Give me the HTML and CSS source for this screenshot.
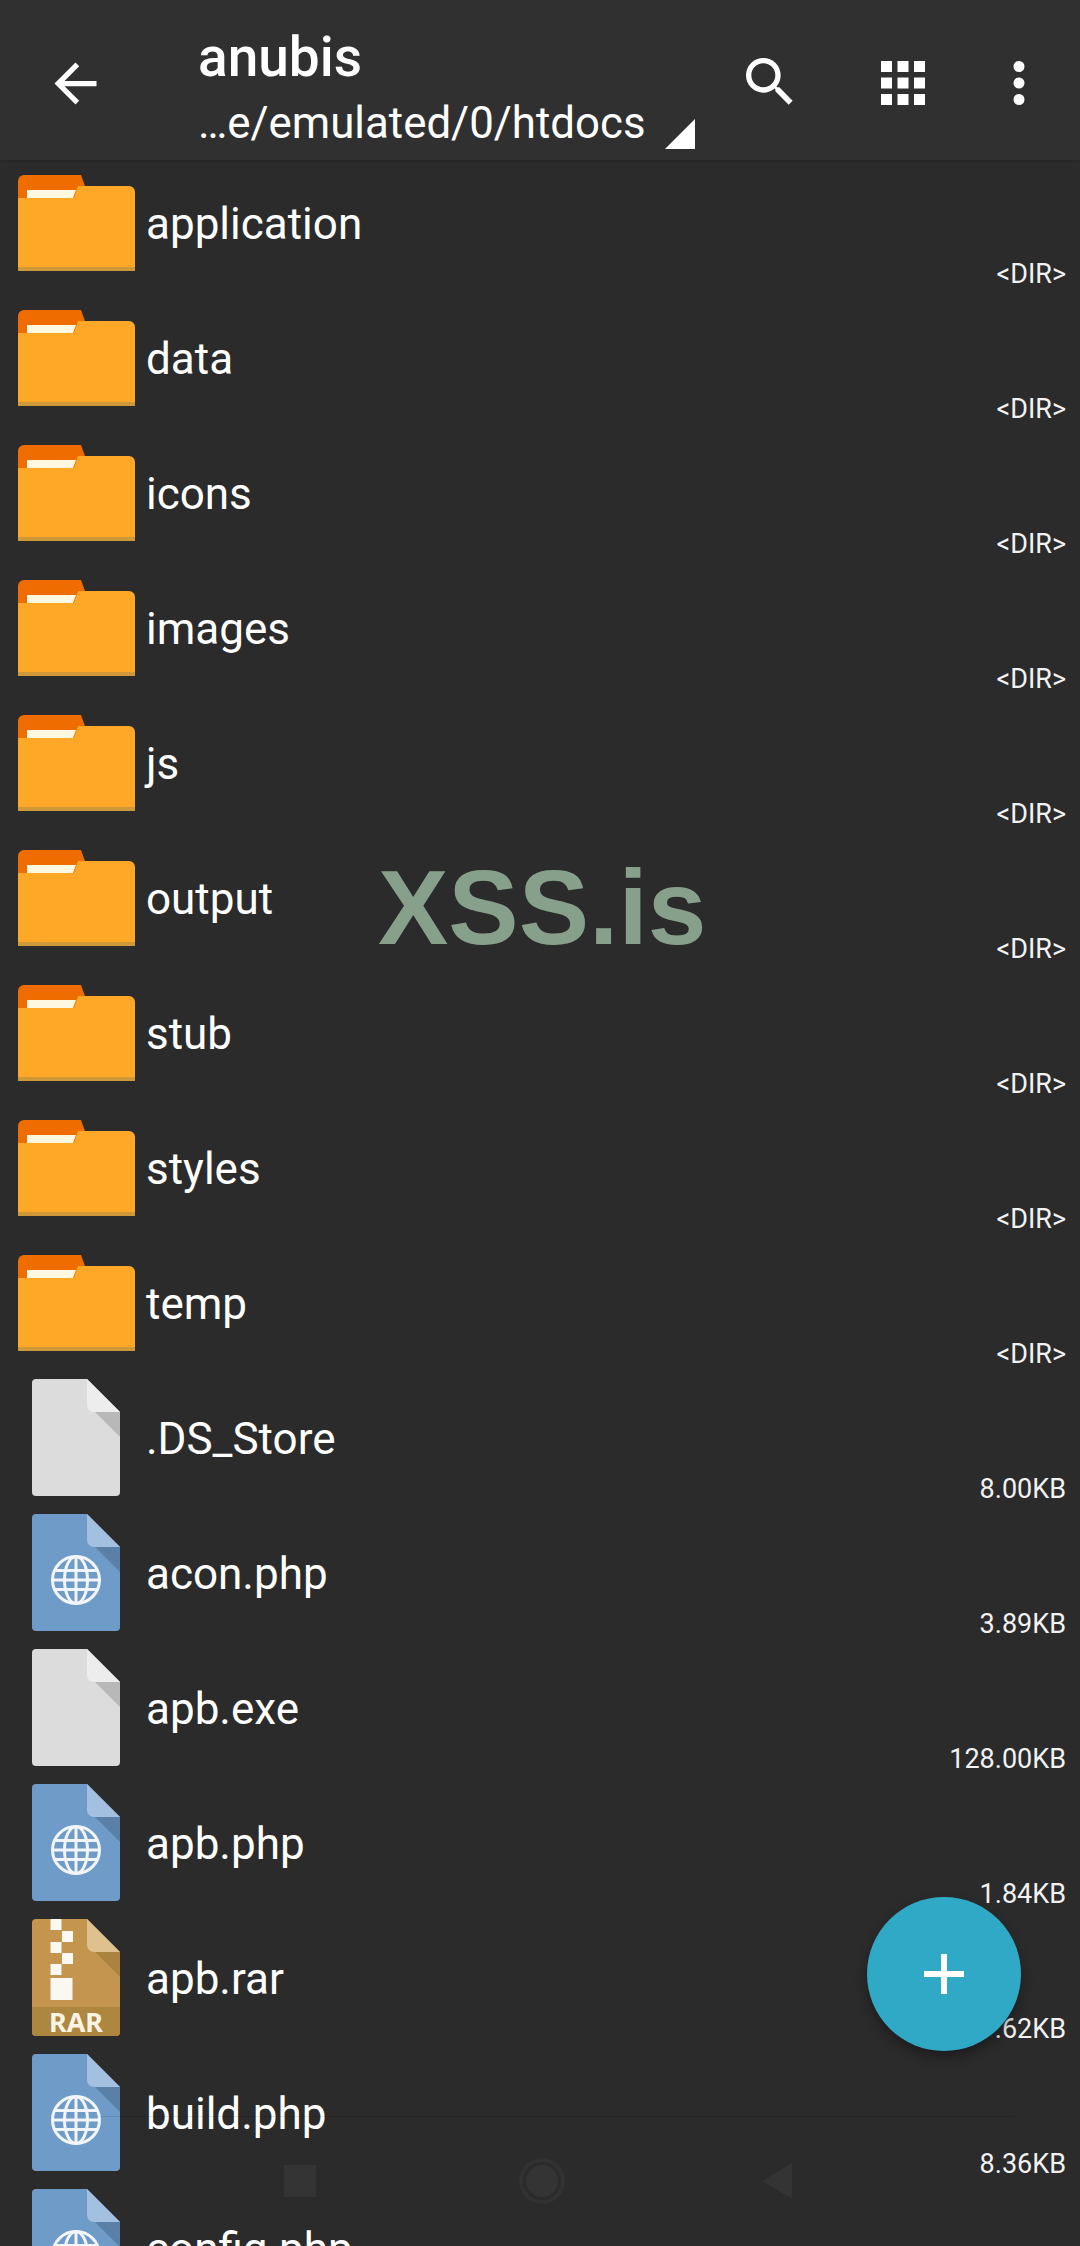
FILE: index.html
```html
<!DOCTYPE html>
<html lang="en">
<head>
    <meta charset="UTF-8">
    <meta name="viewport" content="width=device-width, initial-scale=1.0">
    <title>anubis</title>
    <link rel="stylesheet" href="styles.css">
</head>
<body>
    <svg class="defs" width="0" height="0">
        <defs>
            <symbol id="folder" viewBox="0 0 117 96">
                <path d="M0 6a6 6 0 0 1 6-6h57l4 11h44v30H0z" fill="#ef6c00"/>
                <path d="M0 23h56l4-12h51a6 6 0 0 1 6 6v79H0z" fill="#ffa726"/>
                <path d="M9 15h49l-3 8H9z" fill="#fff8e1"/>
                <rect y="92" width="117" height="4" fill="#cf9838"/>
            </symbol>
            <symbol id="globe" viewBox="0 0 52 52">
                <g fill="none" stroke="#f2f6fa" stroke-width="3">
                    <circle cx="26" cy="26" r="23.5"/>
                    <ellipse cx="26" cy="26" rx="11.5" ry="23.5"/>
                    <path d="M26 2v48M4 16.5h44M2 26h48M4 35.5h44"/>
                </g>
            </symbol>
        </defs>
    </svg>

    <header class="toolbar">
        <svg class="icon back" viewBox="0 0 24 24"><path d="M20 11H7.83l5.59-5.59L12 4l-8 8 8 8 1.41-1.41L7.83 13H20z"/></svg>
        <div class="titles">
            <div class="title">anubis</div>
            <div class="path">…e/emulated/0/htdocs</div>
        </div>
        <svg class="corner" viewBox="0 0 30 30"><path d="M30 0v30H0z"/></svg>
        <svg class="icon search" viewBox="0 0 24 24"><path d="M15.5 14h-.79l-.28-.27A6.47 6.47 0 0 0 16 9.5 6.5 6.5 0 1 0 9.5 16c1.61 0 3.09-.59 4.23-1.57l.27.28v.79l5 4.99L20.49 19l-4.99-5zm-6 0C7.01 14 5 11.99 5 9.5S7.01 5 9.5 5 14 7.01 14 9.5 11.99 14 9.5 14z"/></svg>
        <svg class="icon apps" viewBox="0 0 24 24"><path d="M4 8h4V4H4v4zm6 12h4v-4h-4v4zm-6 0h4v-4H4v4zm0-6h4v-4H4v4zm6 0h4v-4h-4v4zm6-10v4h4V4h-4zm-6 4h4V4h-4v4zm6 6h4v-4h-4v4zm0 6h4v-4h-4v4z"/></svg>
        <svg class="icon more" viewBox="0 0 24 24"><path d="M12 8a2 2 0 1 0 0-4 2 2 0 0 0 0 4zm0 2a2 2 0 1 0 0 4 2 2 0 0 0 0-4zm0 6a2 2 0 1 0 0 4 2 2 0 0 0 0-4z"/></svg>
    </header>

    <main class="list">
        <div class="row"><svg class="folder"><use href="#folder"/></svg><div class="info"><div class="name">application</div><div class="size">&lt;DIR&gt;</div></div></div>
        <div class="row"><svg class="folder"><use href="#folder"/></svg><div class="info"><div class="name">data</div><div class="size">&lt;DIR&gt;</div></div></div>
        <div class="row"><svg class="folder"><use href="#folder"/></svg><div class="info"><div class="name">icons</div><div class="size">&lt;DIR&gt;</div></div></div>
        <div class="row"><svg class="folder"><use href="#folder"/></svg><div class="info"><div class="name">images</div><div class="size">&lt;DIR&gt;</div></div></div>
        <div class="row"><svg class="folder"><use href="#folder"/></svg><div class="info"><div class="name">js</div><div class="size">&lt;DIR&gt;</div></div></div>
        <div class="row"><svg class="folder"><use href="#folder"/></svg><div class="info"><div class="name">output</div><div class="size">&lt;DIR&gt;</div></div></div>
        <div class="row"><svg class="folder"><use href="#folder"/></svg><div class="info"><div class="name">stub</div><div class="size">&lt;DIR&gt;</div></div></div>
        <div class="row"><svg class="folder"><use href="#folder"/></svg><div class="info"><div class="name">styles</div><div class="size">&lt;DIR&gt;</div></div></div>
        <div class="row"><svg class="folder"><use href="#folder"/></svg><div class="info"><div class="name">temp</div><div class="size">&lt;DIR&gt;</div></div></div>

        <div class="row">
            <svg class="file grey" viewBox="0 0 88 117"><path class="body" d="M4 0h51l33 33v80a4 4 0 0 1-4 4H4a4 4 0 0 1-4-4V4a4 4 0 0 1 4-4z"/><path class="shade" d="M63 33h25v25z"/><path class="fold" d="M55 0l33 33H62a7 7 0 0 1-7-7z"/></svg>
            <div class="info"><div class="name">.DS_Store</div><div class="size">8.00KB</div></div>
        </div>
        <div class="row">
            <svg class="file blue" viewBox="0 0 88 117"><path class="body" d="M4 0h51l33 33v80a4 4 0 0 1-4 4H4a4 4 0 0 1-4-4V4a4 4 0 0 1 4-4z"/><path class="shade" d="M63 33h25v25z"/><path class="fold" d="M55 0l33 33H62a7 7 0 0 1-7-7z"/><use href="#globe" x="18" y="40" width="52" height="52"/></svg>
            <div class="info"><div class="name">acon.php</div><div class="size">3.89KB</div></div>
        </div>
        <div class="row">
            <svg class="file grey" viewBox="0 0 88 117"><path class="body" d="M4 0h51l33 33v80a4 4 0 0 1-4 4H4a4 4 0 0 1-4-4V4a4 4 0 0 1 4-4z"/><path class="shade" d="M63 33h25v25z"/><path class="fold" d="M55 0l33 33H62a7 7 0 0 1-7-7z"/></svg>
            <div class="info"><div class="name">apb.exe</div><div class="size">128.00KB</div></div>
        </div>
        <div class="row">
            <svg class="file blue" viewBox="0 0 88 117"><path class="body" d="M4 0h51l33 33v80a4 4 0 0 1-4 4H4a4 4 0 0 1-4-4V4a4 4 0 0 1 4-4z"/><path class="shade" d="M63 33h25v25z"/><path class="fold" d="M55 0l33 33H62a7 7 0 0 1-7-7z"/><use href="#globe" x="18" y="40" width="52" height="52"/></svg>
            <div class="info"><div class="name">apb.php</div><div class="size">1.84KB</div></div>
        </div>
        <div class="row">
            <svg class="file zip" viewBox="0 0 88 117">
                <path class="body" d="M4 0h51l33 33v80a4 4 0 0 1-4 4H4a4 4 0 0 1-4-4V4a4 4 0 0 1 4-4z"/>
                <path class="shade" d="M63 33h25v25z"/>
                <path class="fold" d="M55 0l33 33H62a7 7 0 0 1-7-7z"/>
                <path class="band" d="M0 88h88v25a4 4 0 0 1-4 4H4a4 4 0 0 1-4-4z"/>
                <path class="teeth" d="M18.500 0h11v11h-11zM30 12h11v11H30zM18.500 23h11v11h-11zM30 34h11v11H30zM18.500 45h11v11h-11zM18.500 59h22v22h-22z"/>
                <text class="rar" x="44" y="113">RAR</text>
            </svg>
            <div class="info"><div class="name">apb.rar</div><div class="size">7.62KB</div></div>
        </div>
        <div class="row">
            <svg class="file blue" viewBox="0 0 88 117"><path class="body" d="M4 0h51l33 33v80a4 4 0 0 1-4 4H4a4 4 0 0 1-4-4V4a4 4 0 0 1 4-4z"/><path class="shade" d="M63 33h25v25z"/><path class="fold" d="M55 0l33 33H62a7 7 0 0 1-7-7z"/><use href="#globe" x="18" y="40" width="52" height="52"/></svg>
            <div class="info"><div class="name">build.php</div><div class="size">8.36KB</div></div>
        </div>
        <div class="row">
            <svg class="file blue" viewBox="0 0 88 117"><path class="body" d="M4 0h51l33 33v80a4 4 0 0 1-4 4H4a4 4 0 0 1-4-4V4a4 4 0 0 1 4-4z"/><path class="shade" d="M63 33h25v25z"/><path class="fold" d="M55 0l33 33H62a7 7 0 0 1-7-7z"/><use href="#globe" x="18" y="40" width="52" height="52"/></svg>
            <div class="info"><div class="name">config.php</div></div>
        </div>
    </main>

    <div class="watermark">XSS.is</div>

    <button class="fab">
        <svg viewBox="0 0 40 40"><path d="M17 0h6v17h17v6H23v17h-6V23H0v-6h17z"/></svg>
    </button>

    <!-- ghost of the system nav bar over the list -->
    <div class="navline"></div>
    <nav class="navbar">
        <span class="nav-square"></span>
        <span class="nav-circle"></span>
        <span class="nav-back"></span>
    </nav>
</body>
</html>
```

FILE: styles.css
```css
html, body {
    margin: 0;
    height: 2246px;
    overflow: hidden;
}
body {
    position: relative;
    width: 1080px;
    font-family: Roboto, "Liberation Sans", sans-serif;
    background-color: #2b2b2b;
    color: #fff;
}
.defs {
    position: absolute;
}

/* toolbar */
.toolbar {
    height: 160px;
    background-color: #303030;
    display: flex;
    align-items: flex-start;
    box-shadow: 0 1px 3px rgba(0, 0, 0, 0.15);
}
.icon {
    width: 66px;
    height: 66px;
    margin-top: 50px;
    fill: #fff;
    flex: none;
}
.back {
    width: 63px;
    height: 63px;
    margin-top: 52px;
    margin-left: 44px;
}
.titles {
    margin-left: 91px;
    width: 465px;
    flex: none;
}
.title {
    font-size: 55px;
    font-weight: 500;
    line-height: 60px;
    margin-top: 27px;
}
.path {
    font-size: 43.800px;
    line-height: 50px;
    margin-top: 11px;
    white-space: nowrap;
}
.corner {
    width: 30px;
    height: 30px;
    fill: #fff;
    margin-top: 119px;
    margin-left: 2px;
    flex: none;
}
.search {
    width: 64px;
    height: 64px;
    margin-left: 43px;
}
.apps {
    margin-left: 68px;
}
.more {
    margin-left: 50px;
}

/* file list */
.row {
    height: 135px;
    display: flex;
    align-items: flex-start;
}
.folder {
    width: 117px;
    height: 96px;
    margin: 15px 11px 0 18px;
    flex: none;
}
.file {
    width: 88px;
    height: 117px;
    margin: 4px 26px 0 32px;
    flex: none;
}
.info {
    flex: 1;
    padding-right: 14px;
}
.name {
    font-size: 44px;
    line-height: 52px;
    margin-top: 38px;
}
.size {
    font-size: 27px;
    line-height: 30px;
    margin-top: 9px;
    text-align: right;
    color: #f2f2f2;
}
.grey .body { fill: #dcdcdc; }
.grey .fold { fill: #ededed; }
.grey .shade { fill: #b8b8b8; }
.blue .body { fill: #6f9bc8; }
.blue .fold { fill: #a3c0e0; }
.blue .shade { fill: #5a80a8; }
.zip .body { fill: #c4954f; }
.zip .fold { fill: #dfc08f; }
.zip .shade { fill: #a9833f; }
.zip .band { fill: #ad863f; }
.zip .teeth { fill: #fbf8f2; }
.rar {
    font-family: "Noto Sans", sans-serif;
    font-size: 27px;
    font-weight: 700;
    fill: #fbf3e4;
    text-anchor: middle;
}

/* overlays */
.watermark {
    position: absolute;
    left: 378px;
    top: 847px;
    font-family: "Liberation Sans", Arial, sans-serif;
    font-size: 105.500px;
    font-weight: 700;
    line-height: 120px;
    color: #86a08b;
}
.fab {
    position: absolute;
    left: 867px;
    top: 1897px;
    width: 154px;
    height: 154px;
    padding: 0;
    border: none;
    border-radius: 50%;
    background-color: #30a9c7;
    box-shadow: 0 6px 12px rgba(0, 0, 0, 0.35);
    display: flex;
    align-items: center;
    justify-content: center;
}
.fab svg {
    width: 40px;
    height: 40px;
    fill: #fff;
}
.navline {
    position: absolute;
    left: 100px;
    top: 2116px;
    width: 915px;
    height: 1px;
    background-color: rgba(0, 0, 0, 0.1);
}
.navbar {
    position: absolute;
    left: 284px;
    top: 2158px;
    width: 508px;
    height: 46px;
    display: flex;
    align-items: center;
    justify-content: space-between;
}
.nav-square {
    width: 32px;
    height: 32px;
    background-color: #343434;
}
.nav-circle {
    width: 32px;
    height: 32px;
    margin-left: 5px;
    border: 3px solid #2b2b2b;
    outline: 4px solid #323232;
    border-radius: 50%;
    background-color: #343434;
}
.nav-back {
    width: 30px;
    height: 36px;
    background-color: #343434;
    clip-path: polygon(100% 0, 100% 100%, 0 50%);
}
```
